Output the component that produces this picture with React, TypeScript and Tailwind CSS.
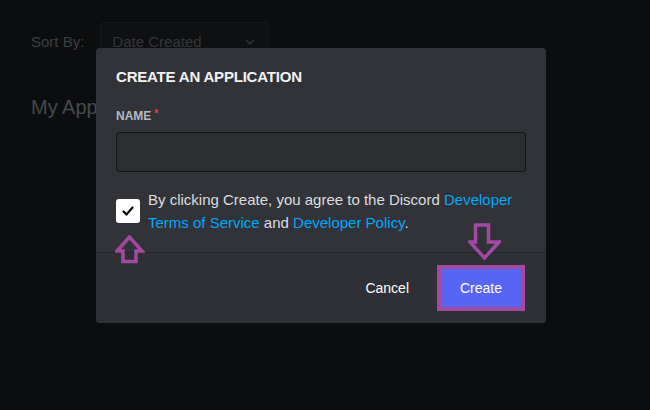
import React from "react";

function ChevronDown() {
  return (
    <svg width="14" height="14" viewBox="0 0 24 24" fill="none" stroke="#2f3136" strokeWidth={3} strokeLinecap="round" strokeLinejoin="round">
      <path d="m6 9 6 6 6-6" />
    </svg>
  );
}

function CheckMark() {
  return (
    <svg width="14" height="14" viewBox="0 0 14 14" fill="none" stroke="#000" strokeWidth={2.2} strokeLinecap="round" strokeLinejoin="round">
      <path d="M2.5 7.5 5.5 10.5 11.5 3.5" />
    </svg>
  );
}

export default function App() {
  return (
    <div className="relative h-[410px] w-[650px] overflow-hidden bg-[#0c0d0f] font-['Liberation_Sans',Arial,sans-serif]">
      {/* Page behind the dimmed backdrop */}
      <div className="pl-[31px] pt-[22px]">
        <div className="flex items-center gap-[16px]">
          <span className="text-[15px] text-[#3d3f44]">Sort By:</span>
          <div className="flex h-[40px] w-[169px] items-center justify-between rounded-[4px] border border-[#16171a] bg-[#0f1012] pl-[11px] pr-[11px]">
            <span className="text-[15px] text-[#34363b]">Date Created</span>
            <ChevronDown />
          </div>
        </div>
        <h2 className="mt-[31px] text-[20px] leading-[28px] text-[#47494e]">My Applications</h2>
      </div>

      {/* Modal */}
      <div className="absolute left-[96px] top-[48px] w-[450px] overflow-hidden rounded-[4px] bg-[#313338]">
        <div className="px-[20px] pb-[18px] pt-[19px]">
          <h1 className="text-[15px] font-bold leading-[20px] tracking-[-0.2px] text-[#f2f3f5]">CREATE AN APPLICATION</h1>

          <div className="mt-[21px] flex items-start gap-[3px] text-[12px] font-bold leading-[16px]">
            <span className="text-[#b5bac1]">NAME</span>
            <span className="text-[10px] leading-[12px] text-[#f23f42]">*</span>
          </div>
          <div className="mt-[8px] h-[40px] w-full rounded-[3px] border border-[#151618] bg-[#2b2d31]" />

          <div className="mt-[16px] flex items-center gap-[8px]">
            <div className="flex h-[24px] w-[24px] shrink-0 items-center justify-center rounded-[3px] bg-white">
              <CheckMark />
            </div>
            <p className="text-[15px] leading-[23px] text-[#dbdee1]">
              By clicking Create, you agree to the Discord <span className="text-[#00a8fc]">Developer</span>{" "}
              <span className="text-[#00a8fc]">Terms of Service</span> and{" "}
              <span className="text-[#00a8fc]">Developer Policy</span>.
            </p>
          </div>
        </div>

        <div className="flex h-[71px] items-center justify-end border-t border-[#232428] bg-[#2e3035] pr-[21px]">
          <button className="mr-[28px] text-[14px] font-medium text-white">Cancel</button>
          <div className="border-[4px] border-[#a349a4]">
            <button className="flex h-[38px] w-[80px] items-center justify-center bg-[#5865f2] text-[14px] font-medium text-white">
              Create
            </button>
          </div>
        </div>
      </div>

      {/* Annotation arrows */}
      <svg className="absolute left-[115px] top-[235px]" width="30" height="29" viewBox="0 0 30 29" fill="none">
        <path d="M14.5 2 L27 16 L21 16 L21 26.5 L8 26.5 L8 16 L2 16 Z" stroke="#a349a4" strokeWidth={3.5} strokeLinejoin="miter" />
      </svg>
      <svg className="absolute left-[468px] top-[223px]" width="33" height="37" viewBox="0 0 33 37" fill="none">
        <path d="M7.5 2 L20.5 2 L20.5 19 L31 19 L16.5 35 L2 19 L7.5 19 Z" stroke="#a349a4" strokeWidth={3.5} strokeLinejoin="miter" />
      </svg>
    </div>
  );
}
